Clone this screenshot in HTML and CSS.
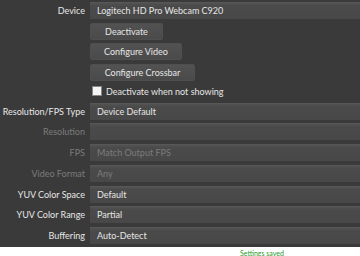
FILE: index.html
```html
<!DOCTYPE html>
<html lang="en">
<head>
  <meta charset="UTF-8" />
  <title>Video Capture Device Properties</title>
  <link rel="stylesheet" href="styles.css">
</head>
<body>
  <div class="panel">
    <div class="row">
      <div class="label">Device</div>
      <div class="combo">Logitech HD Pro Webcam C920</div>
    </div>
    <div class="row">
      <div class="label"></div>
      <button class="btn w-deact">Deactivate</button>
    </div>
    <div class="row">
      <div class="label"></div>
      <button class="btn w-video">Configure Video</button>
    </div>
    <div class="row">
      <div class="label"></div>
      <button class="btn w-cross">Configure Crossbar</button>
    </div>
    <div class="row check-row">
      <div class="label"></div>
      <label class="check"><span class="box"></span>Deactivate when not showing</label>
    </div>
    <div class="row">
      <div class="label">Resolution/FPS Type</div>
      <div class="combo">Device Default</div>
    </div>
    <div class="row disabled">
      <div class="label">Resolution</div>
      <div class="combo"></div>
    </div>
    <div class="row disabled">
      <div class="label">FPS</div>
      <div class="combo">Match Output FPS</div>
    </div>
    <div class="row disabled">
      <div class="label">Video Format</div>
      <div class="combo">Any</div>
    </div>
    <div class="row">
      <div class="label">YUV Color Space</div>
      <div class="combo">Default</div>
    </div>
    <div class="row">
      <div class="label">YUV Color Range</div>
      <div class="combo">Partial</div>
    </div>
    <div class="row">
      <div class="label">Buffering</div>
      <div class="combo">Auto-Detect</div>
    </div>
  </div>
  <div class="footer"><span>Settings saved</span></div>
</body>
</html>
```

FILE: styles.css
```css
body {
  margin: 0;
  width: 360px;
  height: 256px;
  overflow: hidden;
  font-family: Lato, "DejaVu Sans", sans-serif;
  font-size: 9px;
  color: #e6e6e6;
  background-color: #fff;
}

.panel {
  background-color: #3a3a3a;
  padding: 2px 0 2px 0;
  height: 243px;
}

.row {
  display: grid;
  grid-template-columns: 85px 1fr;
  column-gap: 5px;
  align-items: center;
  height: 17px;
  margin-bottom: 3.7px;
}

.label {
  text-align: right;
  white-space: nowrap;
}

.combo {
  height: 17px;
  padding-left: 7px;
  background: linear-gradient(#525252, #4a4a4a 3px, #484848);
  border-top: 1px solid #575757;
  box-sizing: border-box;
  line-height: 15px;
}

.disabled .label,
.disabled .combo {
  color: #7c7c7c;
}

.btn {
  justify-self: start;
  height: 17px;
  padding: 0;
  font-family: inherit;
  font-size: inherit;
  color: #e6e6e6;
  background: linear-gradient(#525252, #4a4a4a);
  border: 1px solid #4f4f4f;
  border-radius: 2px;
}

.w-deact { width: 73px; }
.w-video { width: 92px; }
.w-cross { width: 105px; }

.check-row {
  height: 13px;
  margin-bottom: 5px;
}

.check {
  display: flex;
  align-items: center;
  gap: 4px;
  padding-left: 2px;
}

.box {
  width: 10px;
  height: 10px;
  background-color: #f4f4f4;
  border: 1px solid #888;
  box-sizing: border-box;
}

.footer {
  height: 11px;
  overflow: hidden;
  padding: 2px 0 0 240px;
  box-sizing: border-box;
}

.footer span {
  display: block;
  color: #2a9a2a;
  font-size: 7px;
  line-height: 8px;
}
```
